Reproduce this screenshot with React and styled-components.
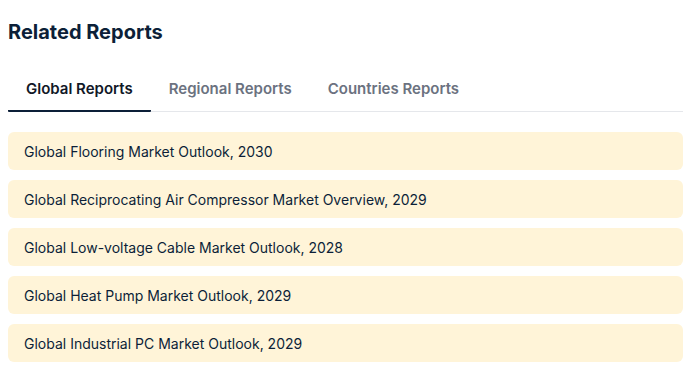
import React, { useState } from 'react'
import styled, { createGlobalStyle } from 'styled-components'

const GlobalStyle = createGlobalStyle`
  body {
    margin: 0;
    background: #ffffff;
    font-family: Inter, "Noto Sans", sans-serif;
  }
`

const Section = styled.section`
  width: 675px;
  padding: 18px 0 0 8px;
`

const Title = styled.h2`
  margin: 0;
  font-size: 20px;
  line-height: 28px;
  font-weight: 700;
  color: #0c1f38;
`

const TabBar = styled.div`
  display: flex;
  margin-top: 24px;
  border-bottom: 1px solid #e5e7eb;
`

const Tab = styled.button`
  border: none;
  background: none;
  padding: 9px 18px 11px;
  margin-bottom: -1px;
  font-family: inherit;
  font-size: 15px;
  line-height: 20px;
  font-weight: 600;
  color: ${p => (p.$active ? '#111827' : '#6b7280')};
  border-bottom: 2px solid ${p => (p.$active ? '#0c1f38' : 'transparent')};
  border-radius: 1px;
  cursor: pointer;
`

const List = styled.ul`
  list-style: none;
  margin: 20px 0 0;
  padding: 0;
  display: flex;
  flex-direction: column;
  gap: 10px;
`

const Item = styled.li`
  height: 38px;
  display: flex;
  align-items: center;
  padding: 0 16px;
  background: #fff4d8;
  border-radius: 6px;
  font-size: 14px;
  color: #0c1f38;
`

const tabs = ['Global Reports', 'Regional Reports', 'Countries Reports']

const reports = [
  'Global Flooring Market Outlook, 2030',
  'Global Reciprocating Air Compressor Market Overview, 2029',
  'Global Low-voltage Cable Market Outlook, 2028',
  'Global Heat Pump Market Outlook, 2029',
  'Global Industrial PC Market Outlook, 2029'
]

const App = () => {
  const [active, setActive] = useState(0)

  return (
    <>
      <GlobalStyle />
      <Section>
        <Title>Related Reports</Title>
        <TabBar>
          {tabs.map((t, i) => (
            <Tab key={t} $active={i === active} onClick={() => setActive(i)}>
              {t}
            </Tab>
          ))}
        </TabBar>
        <List>
          {reports.map(r => (
            <Item key={r}>{r}</Item>
          ))}
        </List>
      </Section>
    </>
  )
}

export default App
